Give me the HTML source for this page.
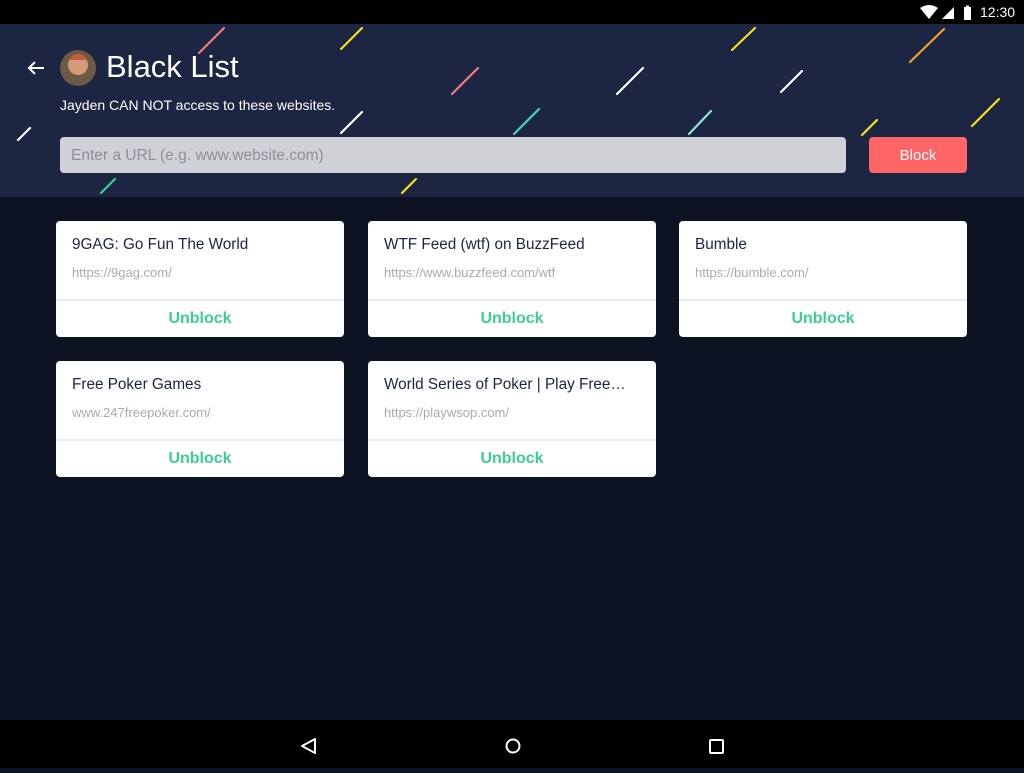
<!DOCTYPE html>
<html><head><meta charset="utf-8"><style>
*{margin:0;padding:0;box-sizing:border-box}
body{width:1024px;height:768px;overflow:hidden;background:#0e1324;font-family:"Liberation Sans",Roboto,sans-serif;position:relative}
.sb{position:absolute;top:0;left:0;width:1024px;height:24px;background:#000;color:#fff;font-size:14px}
.hd{position:absolute;top:24px;left:0;width:1024px;height:173px;background:#1c2541}
.abs{position:absolute}
.card{position:absolute;width:288px;height:116px;background:#fff;border-radius:4px}
.card .t{position:absolute;left:16px;top:15px;font-size:15.3px;color:#1c2541}
.card .u{position:absolute;left:16px;top:44px;font-size:13px;color:#aaa}
.card .d{position:absolute;left:0;right:0;top:78px;height:2px;background:#ebebeb}
.card .b{position:absolute;left:0;right:0;top:89px;text-align:center;font-size:16px;font-weight:bold;color:#3ccf91}
.nb{position:absolute;top:720px;left:0;width:1024px;height:48px;background:#000}
</style></head><body>
<div class="sb">
<svg class="abs" style="left:918px;top:4px" width="60" height="16" viewBox="0 0 60 16">
<path d="M2 4 Q11 -2 20 4 L11 15 Z" fill="#fff"/>
<path d="M24 15 L36 3 L36 15 Z" fill="#fff"/>
<rect x="46" y="3" width="7" height="13" fill="#fff"/><rect x="48" y="1.5" width="3" height="2" fill="#fff"/>
</svg>
<div class="abs" style="left:980px;top:4px">12:30</div>
</div>
<div class="hd"></div>
<svg class="abs" style="left:0;top:0" width="1024" height="200">
<g stroke-width="2.2" stroke-linecap="round">
<line x1="199" y1="53" x2="224" y2="28" stroke="#f47c7c"/>
<line x1="341" y1="49" x2="362" y2="28" stroke="#f5e11a"/>
<line x1="18" y1="140" x2="30" y2="128" stroke="#fff"/>
<line x1="452" y1="94" x2="478" y2="68" stroke="#f47c7c"/>
<line x1="341" y1="133" x2="362" y2="112" stroke="#fff"/>
<line x1="101" y1="193" x2="115" y2="179" stroke="#3ccf91"/>
<line x1="402" y1="193" x2="416" y2="179" stroke="#f5e11a"/>
<line x1="514" y1="134" x2="539" y2="109" stroke="#48d6b0"/>
<line x1="617" y1="94" x2="643" y2="68" stroke="#fff"/>
<line x1="732" y1="50" x2="755" y2="28" stroke="#f5e11a"/>
<line x1="781" y1="92" x2="802" y2="71" stroke="#fff"/>
<line x1="910" y1="62" x2="944" y2="29" stroke="#f0a030"/>
<line x1="689" y1="134" x2="711" y2="111" stroke="#8ce8d0"/>
<line x1="862" y1="135" x2="877" y2="120" stroke="#f5e11a"/>
<line x1="972" y1="126" x2="999" y2="99" stroke="#f5e11a"/>
</g>
<path d="M44 68 H29 M35 62 L29 68 L35 74" stroke="#fff" stroke-width="2" fill="none"/>
<circle cx="78" cy="68" r="18" fill="#6b5a44"/>
<circle cx="78" cy="65" r="10" fill="#d49a7a"/>
<path d="M68 60 Q78 48 88 60" fill="#c0603a"/>
</svg>
<div class="abs" style="left:106px;top:49px;font-size:31px;color:#fff;font-weight:300">Black List</div>
<div class="abs" style="left:60px;top:97px;font-size:14px;color:#fff">Jayden CAN NOT access to these websites.</div>
<div class="abs" style="left:60px;top:137px;width:786px;height:36px;background:#d0d1d6;border-radius:4px;color:#8e9098;font-size:15.5px;padding:10px 11px">Enter a URL (e.g. www.website.com)</div>
<div class="abs" style="left:869px;top:137px;width:98px;height:36px;background:#ff6466;border-radius:4px;color:#fff;font-size:15px;text-align:center;line-height:38px">Block</div>

<div class="card" style="left:56px;top:221px"><div class="t">9GAG: Go Fun The World</div><div class="u">https://9gag.com/</div><div class="d"></div><div class="b">Unblock</div></div>
<div class="card" style="left:368px;top:221px"><div class="t">WTF Feed (wtf) on BuzzFeed</div><div class="u">https://www.buzzfeed.com/wtf</div><div class="d"></div><div class="b">Unblock</div></div>
<div class="card" style="left:679px;top:221px"><div class="t">Bumble</div><div class="u">https://bumble.com/</div><div class="d"></div><div class="b">Unblock</div></div>
<div class="card" style="left:56px;top:361px"><div class="t">Free Poker Games</div><div class="u">www.247freepoker.com/</div><div class="d"></div><div class="b">Unblock</div></div>
<div class="card" style="left:368px;top:361px"><div class="t">World Series of Poker | Play Free…</div><div class="u">https://playwsop.com/</div><div class="d"></div><div class="b">Unblock</div></div>

<div class="nb">
<svg width="1024" height="48">
<path d="M315 19 L302 26 L315 33 Z" stroke="#fff" stroke-width="2" fill="none" stroke-linejoin="round"/>
<circle cx="513" cy="26" r="6.5" stroke="#fff" stroke-width="2" fill="none"/>
<rect x="710" y="20" width="13" height="13" rx="1" stroke="#fff" stroke-width="2" fill="none"/>
</svg>
</div>
</body></html>
